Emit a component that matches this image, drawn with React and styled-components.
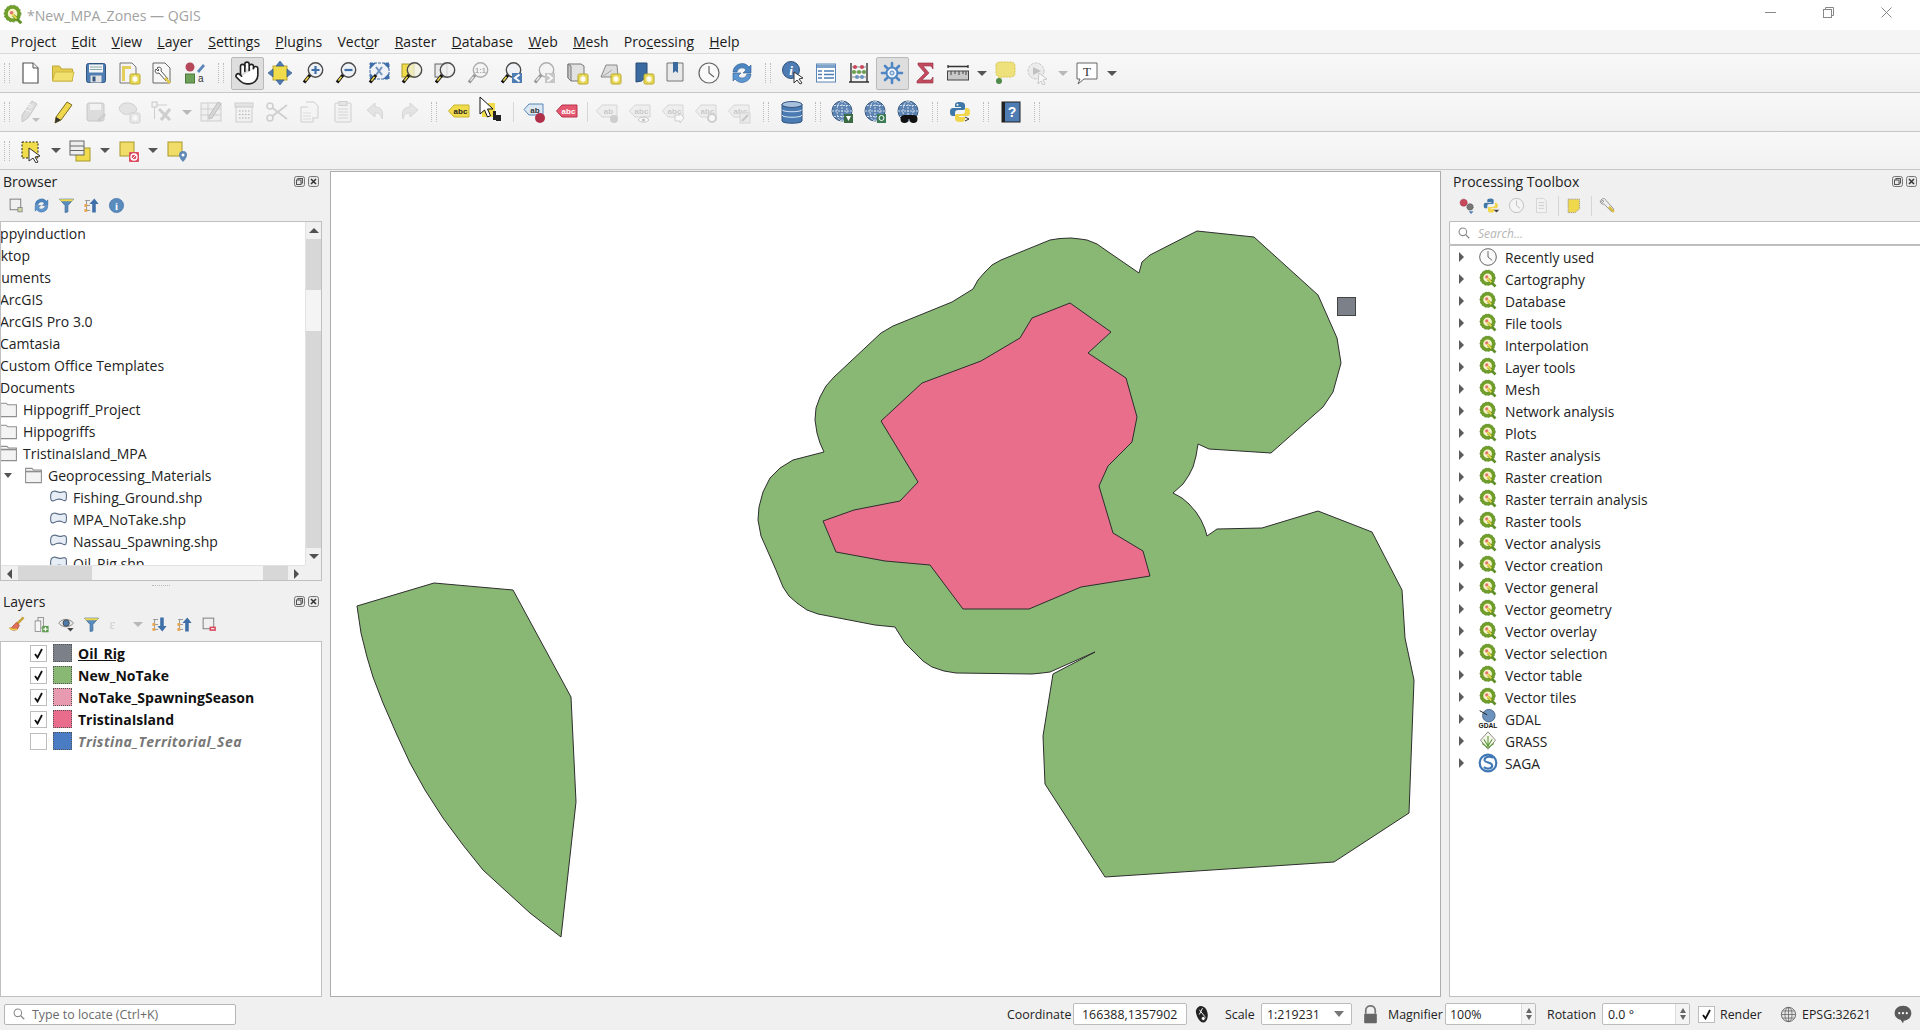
import React from 'react';
import styled, { createGlobalStyle } from 'styled-components';
import { Hand } from 'lucide-react';

const Global = createGlobalStyle`
  html, body { margin: 0; padding: 0; overflow: hidden; background: #f0f0f0; }
  * { box-sizing: border-box; }
  body { font-family: "Open Sans", "Noto Sans", "Liberation Sans", sans-serif; color: #1c1c1c; }
`;

const Shell = styled.div`
  width: 1920px; height: 1030px; display: flex; flex-direction: column; overflow: hidden; background: #f0f0f0;
`;
const TitleBar = styled.div`
  height: 30px; background: #fff; display: flex; align-items: center; padding: 0 5px 0 2px; flex: none;
`;
const TitleText = styled.span`
  font-size: 14.1px; color: #a2a2a2; margin-left: 3px; flex: 1;
`;
const WinBtn = styled.div`
  width: 58px; height: 30px; padding-bottom: 5px; display: flex; align-items: center; justify-content: center;
`;
const MenuBar = styled.div`
  height: 24px; flex: none; display: flex; align-items: center; padding-left: 3px; background: #f5f5f5;
  border-bottom: 1px solid #d9d9d9;
`;
const MenuItem = styled.span`
  font-size: 14px; padding: 0 7.6px; color: #1a1a1a; white-space: nowrap;
`;
const Toolbar = styled.div`
  position: relative; height: ${p => p.$h || 39}px; flex: none; display: flex; align-items: center;
  background: linear-gradient(#f8f8f8, #f1f1f1); border-bottom: 1px solid #c6c6c6;
`;
const Tool = styled.div`
  width: ${p => p.$w || 33}px; height: 33px; flex: none; display: flex; align-items: center; justify-content: center;
  ${p => p.$on && 'background:#dedede; border:1px solid #b9b9b9; border-radius:2px;'}
`;
const Grip = styled.div`
  width: ${p => p.$w}px; flex: none; display: flex; justify-content: center;
  &::before { content: ''; width: 4px; height: 20px; border-left: 1px dotted #bcbcbc; border-right: 1px dotted #bcbcbc; }
`;
const Sep = styled.div`
  width: ${p => p.$w}px; flex: none; display: flex; justify-content: center;
  &::before { content: ''; width: 1px; height: 20px; background: #d6d6d6; }
`;
const Drop = styled.div`
  width: ${p => p.$w}px; flex: none; display: flex; justify-content: center;
  &::before { content: ''; width: 0; height: 0; border-left: 5px solid transparent; border-right: 5px solid transparent;
    border-top: 5px solid ${p => (p.$off ? '#b8b8b8' : '#555')}; }
`;
const Glyph = styled.svg`
  width: ${p => p.$s}px; height: ${p => p.$s}px; flex: none; display: block;
  ${p => p.$off && 'filter: grayscale(1) opacity(.42);'}
`;
const Pointer = styled.svg`
  position: absolute; left: 479px; top: 3px; width: 16px; height: 22px;
`;
const Body = styled.div`
  flex: 1; min-height: 0; display: flex;
`;
const LeftCol = styled.div`
  width: 322px; flex: none; display: flex; flex-direction: column;
`;
const Gutter = styled.div`
  width: 8px; flex: none;
`;
const Canvas = styled.div`
  width: 1111px; flex: none; height: 826px; margin-top: 1px; background: #fff; border: 1px solid #adadad;
`;
const MapSvg = styled.svg`
  display: block; width: 1109px; height: 824px;
`;
const RightCol = styled.div`
  flex: 1; min-width: 0; display: flex; flex-direction: column;
`;
const Dock = styled.div`
  display: flex; flex-direction: column; ${p => (p.$h ? `height:${p.$h}px;flex:none;` : 'flex:1;min-height:0;')}
`;
const DockHead = styled.div`
  height: 22px; flex: none; display: flex; align-items: center; padding-left: ${p => p.$pad || 3}px; font-size: 14px; color: #222;
`;
const DockTitle = styled.span`
  flex: 1;
`;
const DockBtns = styled.div`
  display: flex; gap: 3px; margin-right: 3px;
`;
const MiniBtn = styled.svg`
  width: 11px; height: 11px; display: block;
`;
const DockTools = styled.div`
  height: ${p => p.$h || 29}px; flex: none; display: flex; align-items: center; padding-left: ${p => p.$pad || 3.5}px;
  padding-bottom: ${p => p.$pb || 2}px;
`;
const MiniTool = styled.div`
  width: 25px; height: 24px; flex: none; display: flex; align-items: center; justify-content: center;
`;
const Splitter = styled.div`
  height: 9px; flex: none; display: flex; align-items: center; justify-content: center;
  &::before { content: ''; width: 18px; border-top: 1px dotted #b8b8b8; }
`;
const TreeBox = styled.div`
  position: relative; flex: 1; min-height: 0; background: #fff; border: 1px solid #c0c0c0; overflow: hidden;
  ${p => p.$rightOpen && 'border-right: none;'}
`;
const TreeFrame = styled.div`
  display: grid; grid-template-columns: 1fr 17px; grid-template-rows: 1fr 16px; height: 100%;
`;
const TreeView = styled.div`
  overflow: hidden; min-width: 0; min-height: 0;
`;
const Row = styled.div`
  height: 22px; display: flex; align-items: center; font-size: 14px; white-space: nowrap; color: #222;
`;
const BrowserRow = styled(Row)`
  margin-left: ${p => p.$x}px;
`;
const RowIcon = styled.div`
  width: 18px; margin-right: 6px; margin-left: -24px; flex: none; display: flex; justify-content: center;
`;
const Twisty = styled.div`
  position: absolute; left: 3px; width: 0; height: 0; border-left: 4.5px solid transparent; border-right: 4.5px solid transparent;
  border-top: 5px solid #555;
`;
const VBar = styled.div`
  display: flex; flex-direction: column; background: #f0f0f0; border-left: 1px solid #e2e2e2;
`;
const HBar = styled.div`
  display: flex; background: #f0f0f0; border-top: 1px solid #e2e2e2;
`;
const ScrollBtn = styled.div`
  flex: none; width: ${p => (p.$v ? '100%' : '17px')}; height: ${p => (p.$v ? '17px' : '100%')}; display: flex; align-items: center; justify-content: center;
`;
const Tri = styled.div`
  width: 0; height: 0;
  ${p => p.$dir === 'up' && 'border-left:5px solid transparent;border-right:5px solid transparent;border-bottom:5px solid #505050;'}
  ${p => p.$dir === 'down' && 'border-left:5px solid transparent;border-right:5px solid transparent;border-top:5px solid #505050;'}
  ${p => p.$dir === 'left' && 'border-top:5px solid transparent;border-bottom:5px solid transparent;border-right:5px solid #505050;'}
  ${p => p.$dir === 'right' && 'border-top:5px solid transparent;border-bottom:5px solid transparent;border-left:5px solid #505050;'}
`;
const Track = styled.div`
  ${p => (p.$v ? `height:${p.$len}px;` : `width:${p.$len}px;`)} flex: none; background: ${p => (p.$thumb ? '#f4f4f4' : '#d7d7d7')};
`;
const Corner = styled.div`
  background: #f0f0f0;
`;
const LayerRow = styled(Row)`
  padding-left: 29px; gap: 6px; font-weight: 700; font-size: 14px; color: ${p => (p.$dim ? '#777' : '#111')};
  ${p => p.$dim && 'font-style: italic; letter-spacing: .45px;'}
  ${p => p.$ul && 'text-decoration: underline;'}
`;
const Check = styled.div`
  width: 17px; height: 17px; background: #fff; border: 1px solid #bdbdbd; display: flex; align-items: center; justify-content: center; flex: none;
`;
const Swatch = styled.div`
  width: 19px; height: 18px; flex: none; background: ${p => p.$c}; border: 1px dotted #555;
`;
const SearchBox = styled.div`
  height: 24px; flex: none; margin: 0; background: #fff; border: 1px solid #bcbcbc; border-right: none; border-radius: 2px 0 0 2px;
  display: flex; align-items: center; padding-left: 7px; gap: 7px; font-size: 12px; font-style: italic; color: #b5b5b5;
`;
const ToolRow = styled(Row)`
  padding-left: 9px; font-size: 13.8px;
`;
const ToolArrow = styled.div`
  width: 0; height: 0; border-top: 5px solid transparent; border-bottom: 5px solid transparent; border-left: 5px solid #5c5c5c; flex: none; margin-right: 14px;
`;
const ToolIcon = styled.div`
  width: 20px; margin-right: 7px; flex: none; display: flex; justify-content: center;
`;
const Status = styled.div`
  height: 33px; flex: none; display: flex; align-items: center; padding: 1px 0 0 4px; font-size: 12.4px; color: #222;
`;
const Locator = styled.div`
  width: 232px; height: 21px; flex: none; background: #fff; border: 1px solid #b5b5b5; border-radius: 2px; display: flex; align-items: center;
  padding-left: 7px; gap: 6px; color: #6a6a6a;
`;
const Spacer = styled.div`
  flex: 1;
`;
const Label = styled.span`
  width: ${p => p.$w}px; margin-left: ${p => p.$l || 0}px; flex: none; white-space: nowrap; text-align: ${p => p.$a || 'left'};
`;
const Field = styled.div`
  width: ${p => p.$w}px; margin-left: ${p => p.$l || 0}px; height: 22px; flex: none; background: #fff; border: 1px solid #bcbcbc; border-radius: 2px;
  display: flex; align-items: center; padding-left: ${p => p.$pad || 5}px; justify-content: space-between;
`;
const Spin = styled.div`
  width: 14px; height: 100%; display: flex; flex-direction: column; align-items: center; justify-content: center; gap: 2px; background: #f4f4f4; border-left: 1px solid #dcdcdc;
  &::before { content: ''; border-left: 3.5px solid transparent; border-right: 3.5px solid transparent; border-bottom: 5px solid #666; }
  &::after { content: ''; border-left: 3.5px solid transparent; border-right: 3.5px solid transparent; border-top: 5px solid #666; }
`;
const ComboArrow = styled.div`
  width: 0; height: 0; margin-right: 7px; border-left: 5px solid transparent; border-right: 5px solid transparent; border-top: 6px solid #777;
`;
const Slot = styled.div`
  width: ${p => p.$w}px; margin-left: ${p => p.$l || 0}px; flex: none; display: flex; justify-content: ${p => p.$end ? 'flex-end' : 'center'}; align-items: center;
`;

const handle = <><path d="M9 14 3 21.5" stroke="#111" strokeWidth="3.2" /><path d="M7.5 15.8 4.4 19.7" stroke="#efd84c" strokeWidth="1.5" /></>;
const lens = (fill = '#eef2f6') => <circle cx="14.5" cy="9" r="7.2" fill={fill} stroke="#4a4a4a" strokeWidth="1.4" />;
const badge = (
  <><rect x="13" y="13" width="10" height="10" rx="1.5" fill="#e8d755" stroke="#b8a92a" /><path d="M18 14.5v7M14.8 18h6.4M15.8 15.8l4.4 4.4M20.2 15.8l-4.4 4.4" stroke="#fff" strokeWidth="1.2" /></>
);
const tag = (f, s, t, tc = '#222') => (
  <><path d="M7 5h15v12H7L1.5 11z" fill={f} stroke={s} /><text x="13.5" y="14" fontSize="8" fontWeight="700" fontFamily="Liberation Sans" textAnchor="middle" fill={tc}>{t}</text></>
);
const globe = (
  <><circle cx="11" cy="11" r="10" fill="#5d83b3" stroke="#36587f" /><path d="M1 11h20M11 1v20M3 5.5h16M3 16.5h16" stroke="#cbd9e8" strokeWidth="1" strokeDasharray="2 1" /><ellipse cx="11" cy="11" rx="5" ry="10" fill="none" stroke="#cbd9e8" strokeDasharray="2 1" /></>
);
const bg = <rect x="3" y="3" width="14" height="14" fill="#f0dc66" stroke="#a8982c" />;

const Q = (
  <><circle cx="11.5" cy="10.5" r="7.2" fill="#f8f2c8" stroke="#6f9e2b" strokeWidth="4" /><circle cx="11.5" cy="10.5" r="9.2" fill="none" stroke="#4e7d1f" strokeWidth=".8" strokeDasharray="2 2" /><circle cx="10.5" cy="9.5" r="2" fill="#e2716c" /><path d="M12 12l9 9" stroke="#5f8f25" strokeWidth="3.2" /><path d="M11 11l5 5" stroke="#f0d94a" strokeWidth="2" /></>
);

const I = {
  q: Q,
  newFile: <><path d="M5 2h10l5 5v15H5z" fill="#fff" stroke="#555" strokeWidth="1.2" /><path d="M15 2v5h5" fill="#eee" stroke="#555" /></>,
  open: <><path d="M1.5 20V5h7l2 3h11v12z" fill="#e5cd4e" stroke="#bfa83a" /><path d="M1.5 20 4 11h19l-2 9z" fill="#f3e16f" stroke="#cdb746" /></>,
  save: <><rect x="2.5" y="2.5" width="19" height="19" rx="2" fill="#4f7db3" stroke="#2f5480" /><rect x="5" y="3.5" width="14" height="8" fill="#f4f4f4" /><path d="M6 6h12M6 8.5h12" stroke="#8aa" /><rect x="6.5" y="14.5" width="11" height="7" fill="#e2e2e2" /><rect x="8.5" y="15.5" width="3" height="5" fill="#37587e" /></>,
  printLayout: <><path d="M3 2h12l4 4v16H3z" fill="#f4f4f4" stroke="#777" /><path d="M5 5h3v15H5zM8 5h6v3H8z" fill="#e3cf5b" />{badge}</>,
  layoutMgr: <><path d="M3 2h12l5 5v15H3z" fill="#f7f7f7" stroke="#666" /><path d="M7 7c3-2 5 0 4 3l7 8-2 2-7-8c-3 1-5-1-3-4l2 2 1-1z" fill="#fff" stroke="#555" /><path d="M15 17l5 5" stroke="#e3c94a" strokeWidth="2.5" /></>,
  style: <><circle cx="7" cy="6" r="4.5" fill="#b5485b" /><path d="M14 10l6-7 2 2-6 7z" fill="#5a86b8" /><rect x="2.5" y="13" width="9" height="9" fill="#6ea05a" stroke="#4a7a3b" /><text x="15" y="21" fontSize="10" fontFamily="Liberation Sans" fill="#333">a</text></>,
  panSel: <><rect x="5" y="5" width="14" height="14" fill="#f0dc4a" stroke="#b9a62c" /><path d="M12 0l4 5H8zM12 24l-4-5h8zM0 12l5-4v8zM24 12l-5 4V8z" fill="#4f7db3" stroke="#2f5480" strokeWidth=".6" /></>,
  zoomIn: <>{lens()}{handle}<path d="M14.5 5v8M10.5 9h8" stroke="#3f6fa8" strokeWidth="2.2" /></>,
  zoomOut: <>{lens()}{handle}<path d="M10.5 9h8" stroke="#3f6fa8" strokeWidth="2.2" /></>,
  zoomFull: <><rect x="3" y="2" width="19" height="16" fill="#eef2f6" stroke="#3f6fa8" strokeDasharray="3 1" /><path d="M3 2l6 0-6 6zM22 2h-6l6 6zM22 18h-6l6-6zM3 18h6l-6-6z" fill="#3f6fa8" /><path d="M9 6l6 8M15 6l-6 8" stroke="#6f93bd" strokeWidth="2" />{handle}</>,
  zoomSel: <><rect x="2" y="3" width="12" height="13" fill="#f0dc4a" stroke="#a8982c" />{lens('rgba(240,240,225,.75)')}{handle}</>,
  zoomLayer: <><rect x="2" y="3" width="12" height="13" fill="#e9e9e9" stroke="#666" />{lens('rgba(240,240,240,.8)')}{handle}</>,
  zoomNative: <>{lens()}{handle}<text x="14.5" y="12" fontSize="7.5" textAnchor="middle" fontFamily="Liberation Sans" fontWeight="700" fill="#444">1:1</text></>,
  zoomLast: <>{lens()}{handle}<rect x="13" y="12" width="10" height="10" fill="#4f7db3" /><path d="M20.5 13.5 16 17l4.5 3.500" fill="none" stroke="#fff" strokeWidth="2" /></>,
  zoomNext: <>{lens()}{handle}<rect x="13" y="12" width="10" height="10" fill="#888" /><path d="M15.500 13.5 20 17l-4.500 3.500" fill="none" stroke="#fff" strokeWidth="2" /></>,
  newMap: <><path d="M3 3h13l3 2v15H6l-3-3z" fill="#e2e2e2" stroke="#777" /><path d="M3 3v14l3 3V5z" fill="#c9c9c9" stroke="#777" />{badge}</>,
  new3d: <><path d="M3 16 8 4h11l1 12z" fill="#ddd" stroke="#888" /><path d="M4 16l10-7" stroke="#aaa" />{badge}</>,
  newBookmark: <><path d="M5 2h11v13l-5.500 5L5 21z" fill="#3b6aa0" stroke="#264a75" />{badge}</>,
  showBookmarks: <><path d="M3 2h16v18H3z" fill="#e9e9e9" stroke="#777" /><path d="M9 1h5v11l-2.500-2L9 12z" fill="#3b6aa0" /></>,
  clock: <><circle cx="12" cy="12" r="10" fill="#fafafa" stroke="#666" strokeWidth="1.200" /><path d="M12 5v7l5 4" fill="none" stroke="#666" strokeWidth="1.200" /></>,
  refresh: <><path d="M3 11a9 9 0 0 1 16-5l2-2v8h-8l3-3a5 5 0 0 0-9 2z" fill="#4b85c2" stroke="#2f5c90" strokeWidth=".6" /><path d="M21 13a9 9 0 0 1-16 5l-2 2v-8h8l-3 3a5 5 0 0 0 9-2z" fill="#5d97d2" stroke="#2f5c90" strokeWidth=".6" /></>,
  identify: <><circle cx="10" cy="9" r="8.500" fill="#4f7db3" stroke="#2f5480" /><text x="10" y="14" fontSize="13" fontWeight="700" fontStyle="italic" fontFamily="Liberation Serif" textAnchor="middle" fill="#fff">i</text><path d="M13 11l9 6-4 1 3 4-2 1-3-4-3 3z" fill="#fff" stroke="#333" /></>,
  attrTable: <><rect x="2.500" y="3" width="19" height="18" fill="#fff" stroke="#5a86b8" /><rect x="3" y="3.500" width="18" height="3.500" fill="#7ea3ca" /><path d="M4 10h4M10 10h10M4 13.500h4M10 13.500h10M4 17h4M10 17h10" stroke="#4f7db3" strokeWidth="1.400" /></>,
  stats: <><path d="M4 2v19M20 2v19M2 21h20" stroke="#333" strokeWidth="1.400" /><path d="M4 6h16M4 11h16M4 16h16" stroke="#888" /><circle cx="8" cy="6" r="2" fill="#c9475a" /><circle cx="15" cy="6" r="2" fill="#c9475a" /><circle cx="7" cy="11" r="2" fill="#6aa04c" /><circle cx="12" cy="11" r="2" fill="#6aa04c" /><circle cx="17" cy="11" r="2" fill="#6aa04c" /><circle cx="10" cy="16" r="2" fill="#6a94c2" /><circle cx="15" cy="16" r="2" fill="#6a94c2" /></>,
  gear: <><circle cx="12" cy="12" r="5.500" fill="#eef3f9" stroke="#4f86c4" strokeWidth="2" /><circle cx="12" cy="12" r="2" fill="#cfe0f2" stroke="#4f86c4" /><path d="M12 2v4M12 18v4M2 12h4M18 12h4M5 5l3 3M16 16l3 3M19 5l-3 3M8 16l-3 3" stroke="#4f86c4" strokeWidth="2.600" strokeLinecap="round" /></>,
  sigma: <path d="M5 2h15v6l-2-3H10l6 7-7 7h9l2-3v6H4v-2l8-8-7-8z" fill="#c44a5e" stroke="#8e2f40" strokeWidth=".6" />,
  ruler: <><path d="M2 4v3M22 4v3M2 5.500h20" stroke="#333" strokeWidth="1.300" /><rect x="1.500" y="10" width="21" height="9" fill="#c8c8c8" stroke="#444" /><path d="M5 10v4M9 10v3M13 10v4M17 10v3M20 10v4" stroke="#444" /></>,
  tips: <><path d="M3 4c0-2 2-3 4-3h10c3 0 5 1 5 4v7c0 3-2 4-5 4H9l-3 3v-3c-2-1-3-2-3-4z" fill="#eee07a" stroke="#d6c753" strokeDasharray="2 1" /><circle cx="6" cy="20" r="3" fill="#4f8a4a" /></>,
  action: <><circle cx="10" cy="10" r="8" fill="#ddd" stroke="#888" strokeDasharray="3 1" /><path d="M7 6l8 4-8 4z" fill="#777" /><path d="M13 12l8 6-4 1 2 4-2 1-2-4-3 3z" fill="#fff" stroke="#888" /></>,
  annot: <><path d="M2 2h20v16H9l-6 5 2-5H2z" fill="#fff" stroke="#666" /><text x="12" y="14.500" fontSize="13" fontFamily="Liberation Serif" textAnchor="middle" fill="#333">T</text></>,

  edits: <><path d="M14 1l5 3-9 14-6 4 0-7z" fill="#bbb" stroke="#888" /><path d="M7 5l7 3M6 9l7 3M8 3l7 3" stroke="#eee" /><path d="M14 18h8l-4 4z" fill="#777" /></>,
  pencil: <><path d="M16 2l5 3-11 15-6 3 1-6z" fill="#efd84c" stroke="#7a6c20" /><path d="M5 17l5 3-6 3z" fill="#333" /></>,
  saveEdits: <><rect x="3" y="3" width="17" height="18" rx="2" fill="#bbb" stroke="#888" /><rect x="6" y="4" width="11" height="6" fill="#eee" /><path d="M13 20l7-7 2 2-7 7z" fill="#999" /></>,
  digitize: <><path d="M3 6c3-4 10-4 14-1s3 8-1 8-5 3-9 1-6-5-4-8z" fill="#c9c9c9" stroke="#999" />{badge}</>,
  vertex: <><rect x="2" y="2" width="5" height="5" fill="#eee" stroke="#888" /><path d="M7 5h10M4.500 7v12" stroke="#999" /><path d="M9 9l11 11M20 9l-9 11" stroke="#999" strokeWidth="3" /></>,
  modify: <><rect x="2" y="3" width="20" height="18" fill="#e8e8e8" stroke="#999" /><path d="M2 9h20M2 15h20M9 3v18" stroke="#999" /><path d="M19 2l3 2-9 14-3 1v-3z" fill="#aaa" stroke="#777" /></>,
  del: <><rect x="3" y="3" width="18" height="4" fill="#ccc" stroke="#999" /><rect x="4" y="7" width="16" height="15" fill="#eee" stroke="#999" /><path d="M7 11h11M7 14.500h11M7 18h11" stroke="#c33" strokeDasharray="1.500 1.500" /></>,
  cut: <><circle cx="5" cy="6" r="3" fill="none" stroke="#999" strokeWidth="1.500" /><circle cx="5" cy="18" r="3" fill="none" stroke="#999" strokeWidth="1.500" /><path d="M7.500 8 22 19M7.500 16 22 5" stroke="#999" strokeWidth="1.700" /></>,
  copy: <><path d="M3 7h9l3 3v12H3z" fill="#f3f3f3" stroke="#999" /><path d="M8 2h8l4 4v12h-5" fill="#f3f3f3" stroke="#999" /><path d="M5 13h8M5 16h8M5 19h8" stroke="#bbb" /></>,
  paste: <><rect x="4" y="3" width="16" height="19" rx="1" fill="#eee" stroke="#999" /><rect x="8" y="1.500" width="8" height="4" fill="#ccc" stroke="#999" /><path d="M7 9h10M7 12h10M7 15h10M7 18h10" stroke="#aaa" /></>,
  undo: <path d="M11 3 3 10l8 7v-4c4 0 6 1 7 6 2-8-1-12-7-12z" fill="#ccc" stroke="#aaa" />,
  redo: <path d="M13 3l8 7-8 7v-4c-4 0-6 1-7 6-2-8 1-12 7-12z" fill="#ccc" stroke="#aaa" />,
  abc: tag('#f0dc4a', '#c9b530', 'abc'),
  labelPin: <><path d="M2 6h13v11H2z" fill="#f0dc4a" /><path d="M13 11h3v9h-3zM16 15h5v6h-5z" fill="#222" /><path d="M8 3h7v6H8z" fill="#f0dc4a" /></>,
  abBlue: <><path d="M7 4h14v11H7L2 9.500z" fill="#dbe7f3" stroke="#5a86b8" /><text x="13" y="12.500" fontSize="8" fontWeight="700" fontFamily="Liberation Sans" textAnchor="middle" fill="#333">ab</text><circle cx="18" cy="18" r="5" fill="#b0304a" /></>,
  abcRed: tag('#e45870', '#b9324a', 'abc', '#fff'),
  tagA: <>{tag('#e4e4e4', '#aaa', 'ab', '#888')}<circle cx="19" cy="19" r="4" fill="#999" /></>,
  tagB: <>{tag('#e4e4e4', '#aaa', 'abc', '#888')}<path d="M10 20c3-4 8-4 11 0-3 3-8 3-11 0z" fill="#fff" stroke="#888" /><circle cx="15.500" cy="20" r="1.500" fill="#777" /></>,
  tagC: <>{tag('#e4e4e4', '#aaa', 'abc', '#888')}<path d="M14 15h5v-2l4 5-4 5v-2h-5z" fill="#fff" stroke="#999" /></>,
  tagD: <>{tag('#e4e4e4', '#aaa', 'abc', '#888')}<circle cx="18" cy="18" r="4" fill="#fff" stroke="#999" strokeWidth="2" /></>,
  tagE: <>{tag('#e4e4e4', '#aaa', 'abc', '#888')}<rect x="13" y="13" width="10" height="10" fill="#ddd" stroke="#aaa" /><path d="M15 21l6-6" stroke="#888" strokeWidth="2" /></>,
  db: <><path d="M2 4v17c0 3 20 3 20 0V4z" fill="#4a7cb3" stroke="#2f5480" /><ellipse cx="12" cy="4.500" rx="10" ry="3" fill="#a7c0dc" stroke="#2f5480" /><path d="M2 9.500c0 3 20 3 20 0M2 15c0 3 20 3 20 0" fill="none" stroke="#dbe6f2" /></>,
  globeA: <>{globe}<rect x="13" y="14" width="9" height="9" fill="#3b6b45" /><path d="M15 16h5l-2.500 5z" fill="#fff" /></>,
  globeB: <>{globe}<rect x="13" y="14" width="9" height="9" fill="#3b7b55" /><circle cx="17.500" cy="18" r="2.500" fill="none" stroke="#fff" /></>,
  globeC: <>{globe}<circle cx="7.500" cy="19" r="4" fill="#111" /><circle cx="16.500" cy="19" r="4" fill="#111" /><path d="M7 15h10v4H7z" fill="#111" /></>,
  python: <><path d="M12 2c-4 0-5 1-5 3v2h6v1H5c-2 0-3 1-3 4s1 4 3 4h2v-3c0-2 1-3 3-3h5c2 0 2-1 2-2V5c0-2-2-3-5-3z" fill="#3f78a8" /><circle cx="9.500" cy="4.800" r="1" fill="#fff" /><path d="M12 22c4 0 5-1 5-3v-2h-6v-1h8c2 0 3-1 3-4s-1-4-3-4h-2v3c0 2-1 3-3 3h-5c-2 0-2 1-2 2v3c0 2 2 3 5 3z" fill="#f2d64a" /><path d="M17 17l4 2-4 2" fill="none" stroke="#333" /></>,
  help: <><rect x="3" y="2" width="18" height="20" fill="#4f7db3" stroke="#222" /><rect x="3" y="2" width="3" height="20" fill="#222" /><text x="13" y="17" fontSize="14" fontWeight="700" fontFamily="Liberation Sans" textAnchor="middle" fill="#fff">?</text></>,
  selFeat: <><rect x="3" y="3" width="16" height="16" fill="#f0dc4a" stroke="#222" strokeDasharray="2 1.500" /><path d="M10 9l11 8-5 1 3 5-2 1-3-5-4 3z" fill="#fff" stroke="#333" /></>,
  selAttr: <><rect x="8" y="9" width="14" height="13" fill="#f0dc4a" stroke="#a8982c" /><rect x="2" y="2" width="14" height="14" fill="#eee" stroke="#666" /><path d="M2 7h14M2 11.500h14" stroke="#666" /></>,
  desel: <>{bg}<rect x="12" y="13" width="10" height="10" rx="1" fill="#dc4d62" /><circle cx="17" cy="18" r="3" fill="none" stroke="#fff" strokeWidth="1.300" /><path d="M15 20l4-4" stroke="#fff" /></>,
  selLoc: <>{bg}<path d="M18 12c-3 0-4 2-4 4 0 3 4 7 4 7s4-4 4-7c0-2-1-4-4-4z" fill="#5f89b6" /><circle cx="18" cy="16" r="1.500" fill="#fff" /></>,

  newBox: <><rect x="3" y="3" width="15" height="15" fill="none" stroke="#777" strokeWidth="1.300" /><rect x="14" y="15" width="6" height="6" fill="#cdd8a8" stroke="#777" /></>,
  filter: <><path d="M2 3h20l-8 9v9l-4 1V12z" fill="#5a8bbd" stroke="#3a6a9a" /><path d="M2 3h20l-2 3H4z" fill="#efd84c" /></>,
  collapse: <><path d="M3 5h7M5 5v14h5M5 12h5" stroke="#777" fill="none" /><rect x="2" y="10" width="4" height="4" fill="#e8a34c" /><rect x="2" y="17" width="4" height="4" fill="#e8a34c" /><path d="M16 2l6 8h-4v12h-5V10H9z" fill="#3f6fa8" /></>,
  expand: <><path d="M3 5h7M5 5v14h5M5 12h5" stroke="#777" fill="none" /><rect x="2" y="10" width="4" height="4" fill="#e8a34c" /><rect x="2" y="17" width="4" height="4" fill="#e8a34c" /><path d="M16 22l6-8h-4V2h-5v12H9z" fill="#3f6fa8" /></>,
  info: <><circle cx="12" cy="12" r="10" fill="#5a8bbd" stroke="#3f6fa8" /><text x="12" y="18" fontSize="15" fontWeight="700" fontFamily="Liberation Serif" textAnchor="middle" fill="#fff">i</text></>,
  brush: <><path d="M22 2 12 12" stroke="#c9a23a" strokeWidth="3.500" /><path d="M12 9l4 4-3 6c-4 2-9 1-11-2 3 0 4-1 5-3z" fill="#e0705a" stroke="#a9432e" /><path d="M2 17c3 2 7 2 11 2" stroke="#efd84c" strokeWidth="2" /></>,
  addGroup: <><rect x="7" y="2" width="8" height="15" fill="#eee" stroke="#777" /><rect x="3" y="7" width="8" height="15" fill="#f6f6f6" stroke="#777" /><rect x="13" y="14" width="9" height="9" fill="#5c9a4e" /><path d="M17.500 15.500v6M14.500 18.500h6" stroke="#fff" strokeWidth="1.500" /></>,
  eye: <><path d="M1 10c5-7 15-7 21 0-6 7-16 7-21 0z" fill="#e7e7e7" stroke="#666" /><circle cx="11.500" cy="10" r="4.500" fill="#4d7aa8" stroke="#333" /><path d="M13 17h9l-4.500 5z" fill="#444" /></>,
  filterExpr: <text x="2" y="19" fontSize="20" fontFamily="Liberation Serif" fill="#999">ε</text>,
  removeRect: <><rect x="3" y="3" width="15" height="15" fill="none" stroke="#777" strokeWidth="1.300" /><rect x="12" y="15" width="9" height="6" fill="#d9485e" /><path d="M14 18h5" stroke="#fff" strokeWidth="1.500" /></>,
  models: <><circle cx="8" cy="8" r="5" fill="#c9475a" stroke="#8e2f40" strokeDasharray="2 1" /><circle cx="17" cy="14" r="4.500" fill="#777" stroke="#444" strokeDasharray="2 1" /><path d="M15 20h7l-3.500 4z" fill="#4f7db3" /></>,
  pyDrop: <><path d="M11 2c-4 0-5 1-5 3v2h6v1H4c-2 0-3 1-3 4s1 4 3 4h2v-3c0-2 1-3 3-3h4c2 0 2-1 2-2V5c0-2-1-3-4-3z" fill="#3f78a8" /><path d="M11 22c4 0 5-1 5-3v-2h-5v-1h7c2 0 3-1 3-4 0-2-1-4-3-4h-1v3c0 2-1 3-3 3h-5c-2 0-2 1-2 2v3c0 2 1 3 4 3z" fill="#f2d64a" /><path d="M15 18h8l-4 4z" fill="#444" /></>,
  docLines: <><path d="M5 2h10l4 4v16H5z" fill="#f4f4f4" stroke="#999" /><path d="M8 8h8M8 12h8M8 16h8" stroke="#999" strokeWidth="1.300" /></>,
  ySel: <><path d="M3 3h16v14l-6 5H3z" fill="#efd84c" stroke="#888" strokeDasharray="2 1" /></>,
  wrench: <><path d="M3 4c3-3 6-2 7 1l11 12-3 4L7 10c-3 1-6-2-5-5l3 3 2-2z" fill="#eee" stroke="#777" /><path d="M14 14l7 7" stroke="#d8bd3e" strokeWidth="3.500" /></>,
  mouse: <><path d="M6 3c3-3 8-2 11 3 3 6 2 14-3 16-4 1-7-3-9-8S3 6 6 3z" fill="#222" /><path d="M8 6l8 10M12 4l-4 8" stroke="#fff" strokeWidth="1.200" /><circle cx="13" cy="17" r="2.500" fill="#fff" stroke="#222" /></>,
  lock: <><path d="M6 11V7a6 6 0 0 1 12 0v4" fill="none" stroke="#777" strokeWidth="2.200" /><rect x="4" y="11" width="16" height="12" rx="1" fill="#666" /></>,
  crs: <><circle cx="12" cy="12" r="9" fill="#e6e6e6" stroke="#666" strokeWidth="1.200" /><ellipse cx="12" cy="12" rx="4.500" ry="9" fill="none" stroke="#666" /><path d="M3 12h18M12 3v18M4.500 7.500h15M4.500 16.500h15" stroke="#666" /></>,
  chat: <><path d="M12 2c6 0 10 4 10 9s-4 9-9 9l-1 3-3-4c-4-1-7-4-7-8 0-5 4-9 10-9z" fill="#5a5a5a" /><circle cx="7.500" cy="11" r="1.300" fill="#fff" /><circle cx="12" cy="11" r="1.300" fill="#fff" /><circle cx="16.500" cy="11" r="1.300" fill="#fff" /></>,
  search: <><circle cx="10" cy="10" r="6.500" fill="none" stroke="#8a8a8a" strokeWidth="1.800" /><path d="M15 15l6 6" stroke="#8a8a8a" strokeWidth="2.200" /></>,
  folder: <path d="M2 21V4h7l2 2h11v15z" fill="#f3f3f3" stroke="#8e8e8e" strokeWidth="1.300" />,
  folderOpen: <><path d="M2 21V3h8l2 2h10v16z" fill="#f3f3f3" stroke="#8e8e8e" strokeWidth="1.300" /><path d="M2 7h20" stroke="#8e8e8e" strokeWidth="2" /></>,
  shp: <path d="M2 11c0-5 2-7 5-7 4 0 6 3 10 1 3-1 5 0 5 3v4c0 4-2 5-5 3-4-2-7-1-11 1-3 1-4-1-4-5z" fill="#e7edf5" stroke="#5b6f88" strokeWidth="1.400" />,
  gdal: <><circle cx="13" cy="8" r="7.500" fill="#6c93bd" stroke="#37587f" /><path d="M2 2l9 5" stroke="#222" strokeWidth="1.200" /><text x="12" y="22.500" fontSize="8" fontWeight="700" fontFamily="Liberation Sans" textAnchor="middle" fill="#111">GDAL</text></>,
  grass: <><path d="M12 1l9 10-9 11-9-11z" fill="#f4f7ea" stroke="#777" /><path d="M12 20V6M12 18 7 10M12 18l5-8M12 20l-7-5M12 20l7-5" stroke="#5d9a3a" strokeWidth="1.300" /></>,
  saga: <><circle cx="12" cy="12" r="10" fill="#fff" stroke="#3f78b5" strokeWidth="2.600" /><path d="M18 6c-4-3-11-1-10 3 1 3 9 2 9 6 0 4-6 5-10 2" fill="none" stroke="#3f78b5" strokeWidth="2.600" /></>,
};

const Ico = ({ n, s = 24, off }) => (
  <Glyph viewBox="0 0 24 24" $s={s} $off={off}>{I[n]}</Glyph>
);

const G = w => ({ t: 'grip', w });
const S = w => ({ t: 'sep', w });
const D = (w, off) => ({ t: 'drop', w, off });
const B = (n, off, on) => ({ n, off, on });

const T1 = [G(13.5), B('newFile'), B('open'), B('save'), B('printLayout'), B('layoutMgr'), B('style'), G(19), { t: 'hand' },
  B('panSel'), B('zoomIn'), B('zoomOut'), B('zoomFull'), B('zoomSel'), B('zoomLayer'), B('zoomNative', 1), B('zoomLast'), B('zoomNext', 1),
  B('newMap'), B('new3d'), B('newBookmark'), B('showBookmarks'), B('clock'), B('refresh'), G(18), B('identify'), B('attrTable'), B('stats'), B('gear', 0, 1),
  B('sigma'), B('ruler'), D(14), B('tips'), B('action', 1), D(16, 1), B('annot'), D(16)];
const T2 = [G(13.5), B('edits', 1), B('pencil'), B('saveEdits', 1), B('digitize', 1), B('vertex', 1), D(16, 1), B('modify', 1), B('del', 1), B('cut', 1), B('copy', 1), B('paste', 1), B('undo', 1), B('redo', 1), G(17),
  B('abc'), B('labelPin'), S(9), B('abBlue'), B('abcRed'), S(7), B('tagA', 1), B('tagB', 1), B('tagC', 1), B('tagD', 1), B('tagE', 1), G(20), B('db'), G(18), B('globeA'), B('globeB'), B('globeC'), G(18), B('python'), G(18), B('help'), G(18)];
const T3 = [G(14.5), B('selFeat'), D(16), B('selAttr'), D(16), B('desel'), D(15), B('selLoc')];

const Bar = ({ items, h, children }) => (
  <Toolbar $h={h}>
    {items.map((x, i) => {
      if (x.t === 'grip') return <Grip key={i} $w={x.w} />;
      if (x.t === 'sep') return <Sep key={i} $w={x.w} />;
      if (x.t === 'drop') return <Drop key={i} $w={x.w} $off={x.off} />;
      if (x.t === 'hand') return <Tool key={i} $on><Hand size={26} strokeWidth={1.5} color="#222" fill="#fff" /></Tool>;
      return <Tool key={i} $on={x.on}><Ico n={x.n} off={x.off} /></Tool>;
    })}
    {children}
  </Toolbar>
);

const FloatClose = () => (
  <DockBtns>
    <MiniBtn viewBox="0 0 11 11"><rect x=".5" y=".5" width="10" height="10" rx="2" fill="#e8e8e8" stroke="#777" /><rect x="4" y="2.500" width="4.500" height="4.500" fill="none" stroke="#555" /><rect x="2.500" y="4" width="4.500" height="4.500" fill="#e8e8e8" stroke="#555" /></MiniBtn>
    <MiniBtn viewBox="0 0 11 11"><rect x=".5" y=".5" width="10" height="10" rx="2" fill="#e8e8e8" stroke="#777" /><path d="M3 3l5 5M8 3l-5 5" stroke="#333" strokeWidth="1.500" /></MiniBtn>
  </DockBtns>
);

const browserRows = [
  { x: -19, t: 'Happyinduction' }, { x: -25, t: 'Desktop' }, { x: -25, t: 'Documents' }, { x: -1, t: 'ArcGIS' }, { x: -1, t: 'ArcGIS Pro 3.0' }, { x: -1, t: 'Camtasia' },
  { x: -1, t: 'Custom Office Templates' }, { x: -1, t: 'Documents' }, { x: 22, t: 'Hippogriff_Project', i: 'folder' }, { x: 22, t: 'Hippogriffs', i: 'folder' },
  { x: 22, t: 'TristinaIsland_MPA', i: 'folderOpen' }, { x: 47, t: 'Geoprocessing_Materials', i: 'folderOpen', open: true }, { x: 72, t: 'Fishing_Ground.shp', i: 'shp' },
  { x: 72, t: 'MPA_NoTake.shp', i: 'shp' }, { x: 72, t: 'Nassau_Spawning.shp', i: 'shp' }, { x: 72, t: 'Oil_Rig.shp', i: 'shp' },
];
const layers = [
  { t: 'Oil_Rig', c: '#7c8088', on: 1, ul: 1 }, { t: 'New_NoTake', c: '#88b873', on: 1 }, { t: 'NoTake_SpawningSeason', c: '#e89ab0', on: 1 },
  { t: 'TristinaIsland', c: '#e96c8c', on: 1 }, { t: 'Tristina_Territorial_Sea', c: '#4a7cc4', dim: 1 },
];
const algs = ['Cartography', 'Database', 'File tools', 'Interpolation', 'Layer tools', 'Mesh', 'Network analysis', 'Plots', 'Raster analysis', 'Raster creation',
  'Raster terrain analysis', 'Raster tools', 'Vector analysis', 'Vector creation', 'Vector general', 'Vector geometry', 'Vector overlay', 'Vector selection', 'Vector table', 'Vector tiles'];
const toolRows = [['clock', 'Recently used'], ...algs.map(a => ['q', a]), ['gdal', 'GDAL'], ['grass', 'GRASS'], ['saga', 'SAGA']];

const green = '1139,273 1142,262 1150,255 1197,231 1254,237 1318,295 1337,338 1341,363 1333,392 1323,407 1271,453 1209,449 1198,444 1196,456 1193,467 1189,475 1183,484 1173,493 1182,498 1189,504 1196,512 1201,520 1205,529 1207,536 1217,529 1262,528 1318,511 1372,532 1402,590 1405,638 1414,680 1409,813 1334,862 1105,877 1045,784 1043,736 1053,674 1095,652 1050,672 1042,673 1032,674 956,673 944,671 932,667 923,661 915,653 905,643 895,627 875,625 818,614 807,610 797,603 789,596 783,587 776,570 761,536 758,520 759,507 763,492 770,478 780,468 793,460 824,452 820,443 817,433 815,420 816,408 820,397 826,386 834,377 881,333 893,326 952,302 973,289 978,280 985,272 992,265 1001,260 1050,240 1060,238.500 1071,238 1080,239 1087,240 1097,244 1107,251';
const pink = '1070,303 1111,332 1088,353 1126,378 1137,417 1132,442 1108,466 1099,486 1113,533 1143,551 1150,576 1081,587 1029,609 963,609 930,565 885,561 836,552 823,521 854,510 900,501 918,482 881,421 922,383 981,361 1020,338 1032,318';
const leaf = '357,606 434,583 513,590 571,697 576,802 561,937 530,913 507,892 483,870 463,845 443,818 425,790 410,763 397,735 383,703 373,677 367,657 361,633';

export default function App() {
  return (
    <Shell>
      <Global />
      <TitleBar>
        <Ico n="q" s={22} />
        <TitleText>*New_MPA_Zones — QGIS</TitleText>
        <WinBtn><MiniBtn viewBox="0 0 11 11"><path d="M0 5.500h11" stroke="#888" /></MiniBtn></WinBtn>
        <WinBtn><MiniBtn viewBox="0 0 11 11"><rect x=".5" y="2.500" width="8" height="8" fill="none" stroke="#888" /><path d="M2.500 2.500v-2h8v8h-2" fill="none" stroke="#888" /></MiniBtn></WinBtn>
        <WinBtn><MiniBtn viewBox="0 0 11 11"><path d="M.5.500l10 10M10.500.500l-10 10" stroke="#888" /></MiniBtn></WinBtn>
      </TitleBar>
      <MenuBar>
        <MenuItem>Pro<u>j</u>ect</MenuItem>
        <MenuItem><u>E</u>dit</MenuItem>
        <MenuItem><u>V</u>iew</MenuItem>
        <MenuItem><u>L</u>ayer</MenuItem>
        <MenuItem><u>S</u>ettings</MenuItem>
        <MenuItem><u>P</u>lugins</MenuItem>
        <MenuItem>Vect<u>o</u>r</MenuItem>
        <MenuItem><u>R</u>aster</MenuItem>
        <MenuItem><u>D</u>atabase</MenuItem>
        <MenuItem><u>W</u>eb</MenuItem>
        <MenuItem><u>M</u>esh</MenuItem>
        <MenuItem>Pro<u>c</u>essing</MenuItem>
        <MenuItem><u>H</u>elp</MenuItem>
      </MenuBar>
      <Bar items={T1} />
      <Bar items={T2}>
        <Pointer viewBox="0 0 16 22"><path d="M1 1v17l4.500-4 3 7 3-1.300-3-6.700H14z" fill="#fff" stroke="#111" /></Pointer>
      </Bar>
      <Bar items={T3} h={38} />
      <Body>
        <LeftCol>
          <Dock $h={411}>
            <DockHead><DockTitle>Browser</DockTitle><FloatClose /></DockHead>
            <DockTools>
              {['newBox', 'refresh', 'filter', 'collapse', 'info'].map(n => <MiniTool key={n}><Ico n={n} s={17} /></MiniTool>)}
            </DockTools>
            <TreeBox>
              <TreeFrame>
                <TreeView>
                  {browserRows.map((r, i) => (
                    <BrowserRow key={i} $x={r.x}>
                      {r.open && <Twisty />}
                      {r.i ? <RowIcon><Ico n={r.i} s={19} /></RowIcon> : null}
                      <span>{r.t}</span>
                    </BrowserRow>
                  ))}
                </TreeView>
                <VBar>
                  <ScrollBtn $v><Tri $dir="up" /></ScrollBtn>
                  <Track $v $len={51} />
                  <Track $v $len={41} $thumb />
                  <Track $v $len={217} />
                  <ScrollBtn $v><Tri $dir="down" /></ScrollBtn>
                </VBar>
                <HBar>
                  <ScrollBtn><Tri $dir="left" /></ScrollBtn>
                  <Track $len={74} />
                  <Track $len={171} $thumb />
                  <Track $len={25} />
                  <ScrollBtn><Tri $dir="right" /></ScrollBtn>
                </HBar>
                <Corner />
              </TreeFrame>
            </TreeBox>
          </Dock>
          <Splitter />
          <Dock>
            <DockHead><DockTitle>Layers</DockTitle><FloatClose /></DockHead>
            <DockTools $h={29} $pb={5}>
              {['brush', 'addGroup', 'eye', 'filter'].map(n => <MiniTool key={n}><Ico n={n} s={17} /></MiniTool>)}
              <MiniTool><Ico n="filterExpr" s={17} off /></MiniTool>
              <Drop $w={18} $off />
              {['expand', 'collapse', 'removeRect'].map(n => <MiniTool key={n}><Ico n={n} s={17} /></MiniTool>)}
            </DockTools>
            <TreeBox>
              {layers.map(l => (
                <LayerRow key={l.t} $dim={l.dim} $ul={l.ul}>
                  <Check>
                    {l.on && <MiniBtn viewBox="0 0 11 11"><path d="M2 6l2.500 3.500L9 1" fill="none" stroke="#111" strokeWidth="1.800" /></MiniBtn>}
                  </Check>
                  <Swatch $c={l.c} />
                  <span>{l.t}</span>
                </LayerRow>
              ))}
            </TreeBox>
          </Dock>
        </LeftCol>
        <Gutter />
        <Canvas>
          <MapSvg viewBox="331 172 1109 824">
            <polygon points={green} fill="#88b873" stroke="#2e2e2e" strokeWidth="1" strokeLinejoin="round" />
            <polygon points={pink} fill="#e86e8c" stroke="#2e2e2e" strokeWidth="1" strokeLinejoin="round" />
            <polygon points={leaf} fill="#88b873" stroke="#2e2e2e" strokeWidth="1" strokeLinejoin="round" />
            <rect x="1337.500" y="297.500" width="18" height="18" fill="#7c8088" stroke="#444" />
          </MapSvg>
        </Canvas>
        <Gutter />
        <RightCol>
          <DockHead $pad={4}><DockTitle>Processing Toolbox</DockTitle><FloatClose /></DockHead>
          <DockTools $pad={5}>
            <MiniTool><Ico n="models" s={17} /></MiniTool>
            <MiniTool><Ico n="pyDrop" s={17} /></MiniTool>
            <MiniTool><Ico n="clock" s={17} off /></MiniTool>
            <MiniTool><Ico n="docLines" s={17} off /></MiniTool>
            <Sep $w={8} />
            <MiniTool><Ico n="ySel" s={17} /></MiniTool>
            <Sep $w={8} />
            <MiniTool><Ico n="wrench" s={17} /></MiniTool>
          </DockTools>
          <SearchBox><Ico n="search" s={14} /><span>Search...</span></SearchBox>
          <TreeBox $rightOpen>
            {toolRows.map(([ic, t]) => (
              <ToolRow key={t}>
                <ToolArrow />
                <ToolIcon><Ico n={ic} s={20} /></ToolIcon>
                <span>{t}</span>
              </ToolRow>
            ))}
          </TreeBox>
        </RightCol>
      </Body>
      <Status>
        <Locator><Ico n="search" s={14} /><span>Type to locate (Ctrl+K)</span></Locator>
        <Spacer />
        <Label $w={63}>Coordinate</Label>
        <Field $w={114} $l={3} $pad={8}>166388,1357902</Field>
        <Slot $w={30}><Ico n="mouse" s={19} /></Slot>
        <Label $w={30} $l={8}>Scale</Label>
        <Field $w={91} $l={6}>1:219231<ComboArrow /></Field>
        <Slot $w={36}><Ico n="lock" s={19} /></Slot>
        <Label $w={54}>Magnifier</Label>
        <Field $w={91} $l={3} $pad={4}>100%<Spin /></Field>
        <Label $w={46} $l={11}>Rotation</Label>
        <Field $w={88} $l={9}>0.0 °<Spin /></Field>
        <Slot $w={25} $end><Check><MiniBtn viewBox="0 0 11 11"><path d="M2 6l2.500 3.500L9 1" fill="none" stroke="#111" strokeWidth="1.800" /></MiniBtn></Check></Slot>
        <Label $w={41} $l={5}>Render</Label>
        <Slot $w={28} $l={13}><Ico n="crs" s={19} /></Slot>
        <Label $w={84}>EPSG:32621</Label>
        <Slot $w={34}><Ico n="chat" s={20} /></Slot>
      </Status>
    </Shell>
  );
}
